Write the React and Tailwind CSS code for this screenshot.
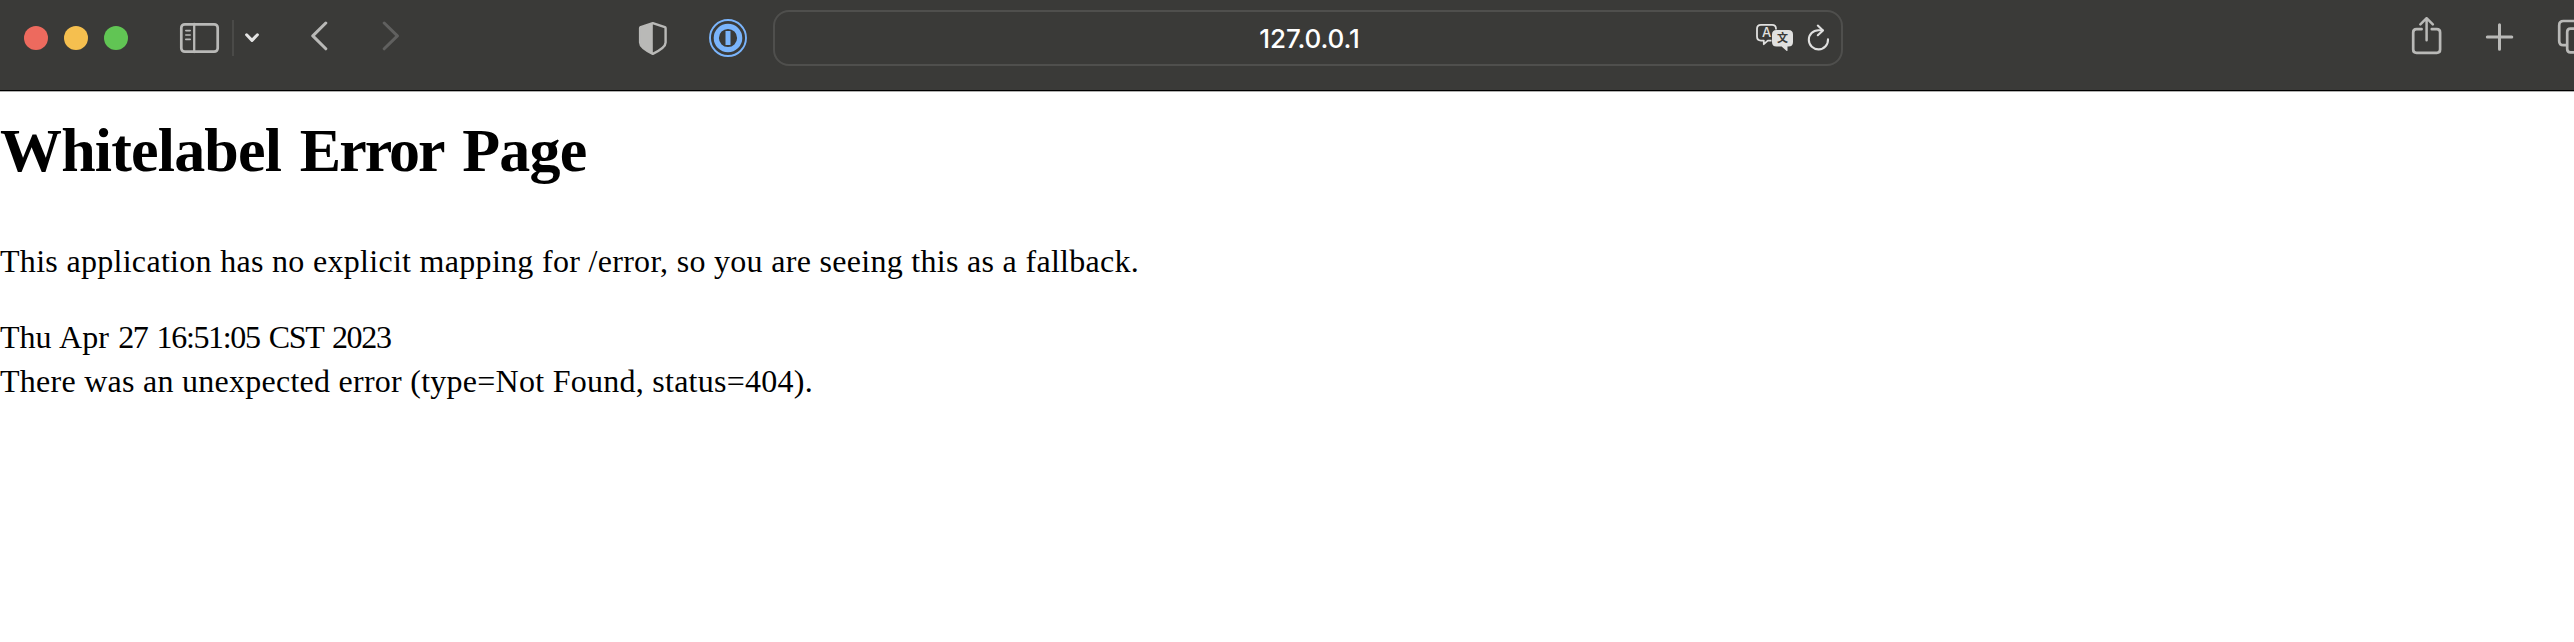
const stroke = {
  fill: 'none',
  stroke: '#b9b9b7',
  strokeWidth: 2.7,
  strokeLinecap: 'round',
  strokeLinejoin: 'round',
};

function SidebarIcon() {
  return (
    <svg className="ml-[50px] h-[34px] w-[42px] shrink-0" viewBox="178 20 42 34" {...stroke}>
      <rect x="181.3" y="23.3" width="36.4" height="27.4" rx="3.5" />
      <path d="M194.2 23v28" strokeWidth="2.3" />
      <path d="M185.8 29.6h4.4M185.8 34h4.4M185.8 38.4h4.4" strokeWidth="1.6" />
    </svg>
  );
}

function ShieldIcon() {
  return (
    <svg className="h-[36px] w-[32px]" viewBox="637 19 32 36">
      <path
        d="M652.8 22.1 640.8 26.1Q640.1 26.4 640.1 27.2V41.5C640.1 46 646 49.6 652.8 52.8C659.6 49.6 665.6 46 665.6 41.5V27.2Q665.6 26.4 664.9 26.1Z"
        fill="none"
        stroke="#b9b9b7"
        strokeWidth="2.4"
        strokeLinejoin="round"
      />
      <path
        d="M652.8 22.1 640.8 26.1Q640.1 26.4 640.1 27.2V41.5C640.1 46 646 49.6 652.8 52.8Z"
        fill="#b9b9b7"
      />
    </svg>
  );
}

function PasswordIcon() {
  return (
    <svg className="ml-10 h-[38px] w-[38px]" viewBox="0 0 38 38" fill="none" stroke="#7ab4fb">
      <circle cx="19" cy="19" r="18" strokeWidth="1.9" />
      <circle cx="19" cy="19" r="11.7" strokeWidth="5.2" />
      <path d="M19 12v14" strokeWidth="5" />
    </svg>
  );
}

function TranslateIcon() {
  return (
    <svg className="h-[30px] w-[38px]" viewBox="1756 22 38 30">
      <path
        d="M1771.5 39.6H1767.8L1763.8 43.2V39.6H1761Q1757 39.6 1757 35.6V27.8Q1757 23.8 1761 23.8H1772Q1776 23.8 1776 27.8V28.5"
        fill="none"
        stroke="#e0e0df"
        strokeWidth="1.8"
        strokeLinejoin="round"
      />
      <text x="1766.6" y="36.4" textAnchor="middle" fill="#e0e0df" className="font-['Inter',sans-serif] text-[13px] font-medium">
        A
      </text>
      <path
        d="M1776.5 29H1788.5Q1793 29 1793 33.5V41Q1793 45.5 1788.5 45.5H1787.5V49.4Q1787.3 50.3 1786.4 49.8L1781.6 45.5H1776.5Q1772 45.5 1772 41V33.5Q1772 29 1776.5 29Z"
        fill="#e0e0df"
      />
      <text x="1782.4" y="41.4" textAnchor="middle" fill="#3a3a38" className="font-['Noto_Sans_CJK_SC',sans-serif] text-[11px] font-bold">
        文
      </text>
    </svg>
  );
}

function ReloadIcon() {
  return (
    <svg className="ml-[13px] h-[28px] w-[24px]" viewBox="1807 23 24 28" {...stroke} stroke="#e0e0df" strokeWidth="2.1">
      <path d="M1828 38.2A9.6 9.6 0 1 1 1818.4 29.2H1822.6" />
      <path d="M1817.8 24.6 1823 29.4 1817.8 34.2" />
    </svg>
  );
}

function Toolbar() {
  return (
    <header className="flex h-[92px] w-full items-start overflow-hidden border-b border-[#b0b0af]">
      <div className="flex h-[91px] w-full border-b border-black bg-[#3a3a38]">
        <div className="flex h-[76px] w-[637px] shrink-0 items-center pl-6">
          <div className="flex gap-4">
            <span className="size-6 rounded-full bg-[#ed6a5e]" />
            <span className="size-6 rounded-full bg-[#f5bf4f]" />
            <span className="size-6 rounded-full bg-[#61c554]" />
          </div>
          <SidebarIcon />
          <span className="ml-3 h-9 w-0.5 bg-[#4a4a48]" />
          <svg className="ml-2.5 h-[12px] w-[16px]" viewBox="244 32 16 12" {...stroke} stroke="#e4e4e3" strokeWidth="3">
            <path d="M246.6 34.8 252 40.4 257.4 34.8" />
          </svg>
          <svg className="ml-[50px] mb-1 h-[30px] w-[18px]" viewBox="310 22 18 30" {...stroke} strokeWidth="3">
            <path d="M325.8 24 312.8 36.9 325.8 49.8" />
          </svg>
          <svg className="ml-[54px] mb-1 h-[30px] w-[18px]" viewBox="382 22 18 30" {...stroke} stroke="#60605f" strokeWidth="3">
            <path d="M384.2 24 397.4 36.9 384.2 49.8" />
          </svg>
        </div>
        <div className="flex h-[76px] w-[136px] shrink-0 items-center">
          <ShieldIcon />
          <PasswordIcon />
        </div>
        <div className="mt-2.5 flex h-14 w-[1070px] shrink-0 items-center rounded-2xl border-2 border-[#4f4f4d]">
          <div className="w-[981px] shrink-0 pt-0.5 pl-[88px] text-center font-['Inter',sans-serif] text-[26px] leading-8 font-medium tracking-[-0.1px] text-white">
            127.0.0.1
          </div>
          <TranslateIcon />
          <ReloadIcon />
        </div>
        <div className="flex h-[74px] grow items-center pl-[567px]">
          <svg className="h-[40px] w-[34px] shrink-0" viewBox="2410 17 34 40" {...stroke}>
            <path d="M2421.6 29.2H2416.5Q2413.2 29.2 2413.2 32.5V49.5Q2413.2 52.8 2416.5 52.8H2436.8Q2440.1 52.8 2440.1 49.5V32.5Q2440.1 29.2 2436.8 29.2H2431.8" />
            <path d="M2426.6 40.3V19M2420.4 24.4 2426.6 18.2 2432.8 24.4" strokeWidth="2.5" />
          </svg>
          <svg className="ml-[41px] h-[30px] w-[30px] shrink-0" viewBox="2485 21.5 30 30" {...stroke} strokeWidth="3">
            <path d="M2487.3 36.4H2511.8M2499.5 24.2V48.8" />
          </svg>
          <svg className="ml-[41px] h-[36px] w-[18px] shrink-0" viewBox="2556 19 18 36" {...stroke}>
            <path d="M2566 45.2H2563.5Q2559.2 45.2 2559.2 41V25.2Q2559.2 21 2563.5 21H2580" />
            <path d="M2580 28.6H2570.5Q2567.2 28.6 2567.2 32V49Q2567.2 52.4 2570.5 52.4H2580" />
          </svg>
        </div>
      </div>
    </header>
  );
}

export default function App() {
  return (
    <div className="h-[642px] w-[2574px] overflow-hidden bg-white">
      <Toolbar />
      <main className="font-['Liberation_Serif',serif] text-[32px] leading-[44px] whitespace-nowrap text-black">
        <h1 className="mt-[14px] text-[62px] leading-[88px] font-bold tracking-[-0.82px] [word-spacing:4px]">
          Whitelabel <span className="tracking-[-2px]">Error</span> Page
        </h1>
        <p className="mt-[45px] tracking-[0.3px]">
          This application has no explicit mapping for /error, so you are seeing this as a fallback.
        </p>
        <div className="mt-8 [word-spacing:1.3px]">
          Thu Apr <span className="tracking-[-1.35px] [word-spacing:2.5px]">27 16:51:05 CST 2023</span>
        </div>
        <div className="tracking-[0.26px]">There was an unexpected error (type=Not Found, status=404).</div>
      </main>
    </div>
  );
}
